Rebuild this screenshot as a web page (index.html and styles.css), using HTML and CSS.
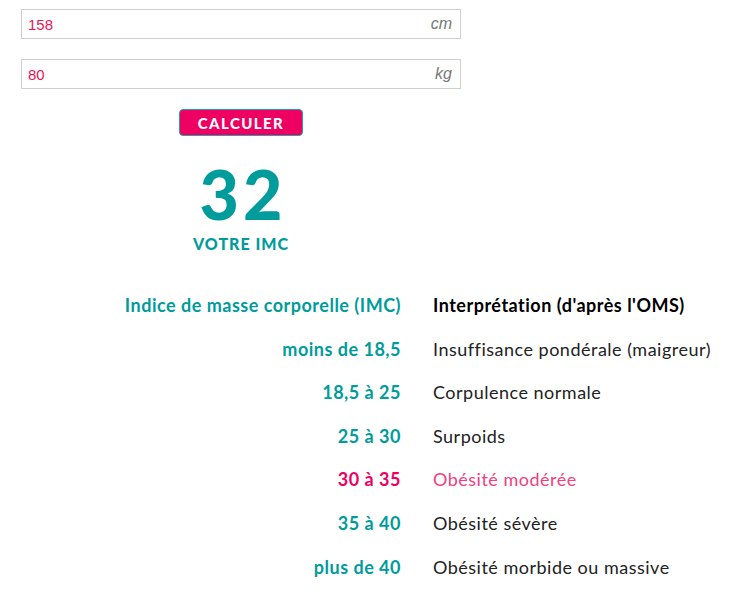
FILE: index.html
```html
<!DOCTYPE html>
<html lang="fr">
<head>
<meta charset="utf-8">
<link rel="stylesheet" href="styles.css">
</head>
<body>
<div class="form">
  <div class="field"><span class="val">158</span><span class="unit">cm</span></div>
  <div class="field"><span class="val">80</span><span class="unit">kg</span></div>
  <div class="btn-row"><button class="btn">CALCULER</button></div>
  <div class="result">
    <div class="num">32</div>
    <div class="label">VOTRE IMC</div>
  </div>
</div>
<div class="table">
  <div class="c1 head">Indice de masse corporelle (IMC)</div><div class="c2 head">Interprétation (d'après l'OMS)</div>
  <div class="c1">moins de 18,5</div><div class="c2">Insuffisance pondérale (maigreur)</div>
  <div class="c1">18,5 à 25</div><div class="c2">Corpulence normale</div>
  <div class="c1">25 à 30</div><div class="c2">Surpoids</div>
  <div class="c1 hl">30 à 35</div><div class="c2 hl">Obésité modérée</div>
  <div class="c1">35 à 40</div><div class="c2">Obésité sévère</div>
  <div class="c1">plus de 40</div><div class="c2">Obésité morbide ou massive</div>
</div>
</body>
</html>
```
FILE: styles.css
```css
body {
  margin: 0;
  padding: 9px 0 0 21px;
  background: #fff;
  font-family: "Liberation Sans", Arial, sans-serif;
}
.form {
  width: 440px;
  display: flex;
  flex-direction: column;
}
.field {
  box-sizing: border-box;
  height: 30px;
  border: 1px solid #cfcfcf;
  display: flex;
  align-items: center;
  justify-content: space-between;
  padding: 0 8px 0 6px;
  margin-bottom: 20px;
  font-size: 15px;
}
.val { color: #ea1557; }
.unit { color: #777; font-style: italic; font-size: 16px; }
.btn-row { display: flex; justify-content: center; }
.btn {
  width: 124px;
  height: 27px;
  background: #ee0062;
  color: #fff;
  border: 1px solid #1fa7a8;
  border-radius: 4px;
  font-family: Lato, sans-serif;
  font-weight: 900;
  font-size: 15px;
  letter-spacing: 1.4px;
  padding: 0;
}
.result {
  display: flex;
  flex-direction: column;
  align-items: center;
  color: #009b9b;
  font-family: Lato, sans-serif;
  font-weight: 900;
}
.num { font-size: 68px; line-height: 1; margin-top: 24px; letter-spacing: 4px; padding-left: 4px; }
.label { font-size: 16px; margin-top: 6px; letter-spacing: 1px; }
.table {
  display: grid;
  grid-template-columns: 380px auto;
  column-gap: 32px;
  row-gap: 22.6px;
  margin-top: 42px;
  font-family: Lato, sans-serif;
  font-size: 18px;
  line-height: 21px;
  letter-spacing: 0.5px;
}
.c1 { text-align: right; color: #009b9b; font-weight: 700; }
.c2 { color: #222; }
.c2.head { color: #000; font-weight: 700; }
.hl { color: #ee0062; }
.c2.hl { color: #f0407e; }
```
